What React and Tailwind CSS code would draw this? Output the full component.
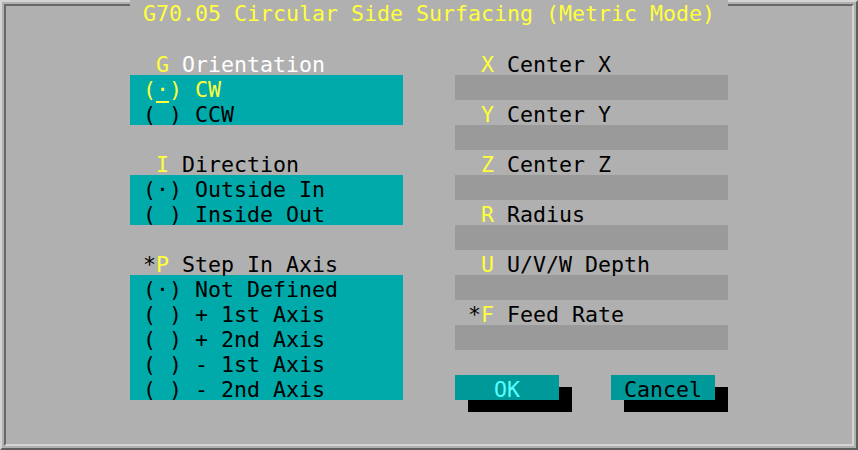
import React from "react";

const Y = ({ children }) => <span className="text-[#ffff3c]">{children}</span>;

function Row({ children, className = "" }) {
  return (
    <div className={"h-[25px] leading-[29px] whitespace-pre " + className}>
      {children}
    </div>
  );
}

function Field() {
  return <div className="h-[25px] bg-[#9a9a9a]"></div>;
}

function Label({ hot, text, star }) {
  return (
    <Row>
      {star ? " *" : "  "}
      <Y>{hot}</Y> {text}
    </Row>
  );
}

export default function App() {
  return (
    <div
      className="relative w-[858px] h-[450px] bg-[#b0b0b0] text-black text-[21.6px]"
      style={{ fontFamily: '"DejaVu Sans Mono", "Liberation Mono", monospace' }}
    >
      <div className="h-full border-2 border-t-[#d4d4d4] border-l-[#d4d4d4] border-r-[#5e5e5e] border-b-[#5e5e5e] p-[2px]">
        <div className="h-full border-2 border-t-[#686868] border-l-[#686868] border-r-[#d4d4d4] border-b-[#d4d4d4]">
          <div className="flex pt-[44px] pl-[124px] gap-[52px]">
            {/* left column */}
            <div className="w-[273px]">
              <Row>
                {"  "}
                <Y>G</Y> <span className="text-white">Orientation</span>
              </Row>
              <div className="bg-[#00aaaa]">
                <Row className="text-[#ffff3c]">
                  {" ("}
                  <span className="relative">
                    ·
                    <span className="absolute left-0 right-0 top-[24px] h-[2px] bg-[#ffff3c]"></span>
                  </span>
                  {") CW"}
                </Row>
                <Row>{" ( ) CCW"}</Row>
              </div>
              <Row></Row>
              <Label hot="I" text="Direction" />
              <div className="bg-[#00aaaa]">
                <Row>{" (·) Outside In"}</Row>
                <Row>{" ( ) Inside Out"}</Row>
              </div>
              <Row></Row>
              <Label hot="P" text="Step In Axis" star />
              <div className="bg-[#00aaaa]">
                <Row>{" (·) Not Defined"}</Row>
                <Row>{" ( ) + 1st Axis"}</Row>
                <Row>{" ( ) + 2nd Axis"}</Row>
                <Row>{" ( ) - 1st Axis"}</Row>
                <Row>{" ( ) - 2nd Axis"}</Row>
              </div>
            </div>

            {/* right column */}
            <div className="w-[273px]">
              <Label hot="X" text="Center X" />
              <Field />
              <Label hot="Y" text="Center Y" />
              <Field />
              <Label hot="Z" text="Center Z" />
              <Field />
              <Label hot="R" text="Radius" />
              <Field />
              <Label hot="U" text="U/V/W Depth" />
              <Field />
              <Label hot="F" text="Feed Rate" star />
              <Field />
              <Row></Row>
              <div className="flex gap-[52px]">
                <div className="w-[104px] h-[25px] leading-[29px] whitespace-pre bg-[#009999] text-[#55ffff] shadow-[13px_12px_0_#000]">
                  {"   OK"}
                </div>
                <div className="w-[104px] h-[25px] leading-[29px] whitespace-pre bg-[#009999] text-black shadow-[13px_12px_0_#000]">
                  {" Cancel"}
                </div>
              </div>
            </div>
          </div>
        </div>
      </div>

      <div className="absolute left-[130px] top-0 h-[25px] px-[13px] leading-[27px] whitespace-pre bg-[#b0b0b0] text-[#ffff3c]">
        G70.05 Circular Side Surfacing (Metric Mode)
      </div>
    </div>
  );
}
